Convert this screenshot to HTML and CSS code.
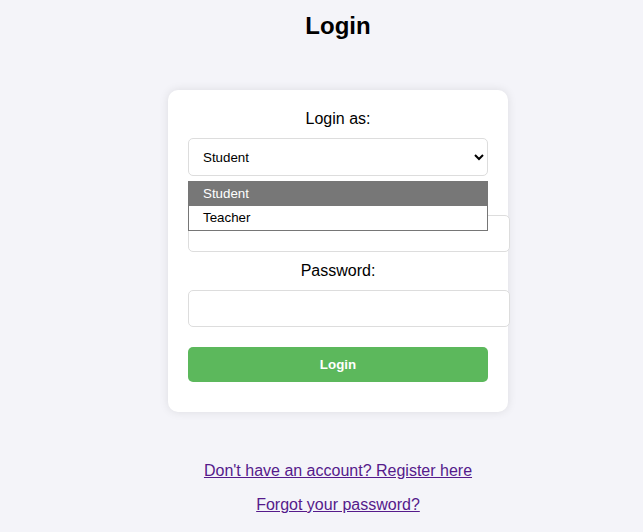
FILE: index.html
```html
<!DOCTYPE html>
<html>
<head>
<meta charset="utf-8">
<title>Login</title>
<link rel="stylesheet" href="styles.css">
</head>
<body>
<main class="page">
  <h2 class="title">Login</h2>
  <form class="card">
    <label class="label">Login as:</label>
    <div class="select-wrap">
      <select class="select">
        <option>Student</option>
        <option>Teacher</option>
      </select>
      <ul class="menu">
        <li class="menu-item active">Student</li>
        <li class="menu-item">Teacher</li>
      </ul>
    </div>
    <label class="label">Username:</label>
    <input class="input" type="text">
    <label class="label">Password:</label>
    <input class="input" type="password">
    <button class="btn" type="button">Login</button>
  </form>
  <div class="links">
    <a class="link" href="#">Don't have an account? Register here</a>
    <a class="link" href="#">Forgot your password?</a>
  </div>
</main>
</body>
</html>
```
FILE: styles.css
```css
html, body {
  margin: 0;
  padding: 0;
  background: #f4f4f9;
  font-family: "Liberation Sans", Arial, sans-serif;
}
.page {
  padding-left: 33px;
  display: flex;
  flex-direction: column;
  align-items: center;
}
.title {
  font-size: 24px;
  font-weight: bold;
  margin: 12px 0 0;
  line-height: 28px;
  color: #000;
}
.card {
  margin-top: 50px;
  width: 300px;
  padding: 20px;
  background: #fff;
  border-radius: 10px;
  box-shadow: 0 0 10px rgba(0, 0, 0, 0.1);
  display: flex;
  flex-direction: column;
  align-items: stretch;
}
.label {
  display: block;
  text-align: center;
  font-size: 16px;
  line-height: 18px;
  color: #000;
  margin-bottom: 10px;
}
.select-wrap {
  position: relative;
  margin-bottom: 11px;
}
.select {
  display: block;
  width: 300px;
  height: 38px;
  box-sizing: border-box;
  padding: 0 10px;
  font-family: "Liberation Sans", Arial, sans-serif;
  font-size: 13.33px;
  border: 1px solid #ddd;
  border-radius: 5px;
  background: #fff;
  color: #000;
}
.menu {
  position: absolute;
  left: 0;
  top: 43px;
  width: 300px;
  box-sizing: border-box;
  margin: 0;
  padding: 0;
  list-style: none;
  background: #fff;
  border: 1px solid #767676;
  z-index: 5;
}
.menu-item {
  height: 24px;
  line-height: 24px;
  padding-left: 14px;
  font-size: 13.33px;
  color: #000;
}
.menu-item.active {
  background: #777;
  color: #fff;
}
.input {
  display: block;
  width: 300px;
  padding: 10px;
  border: 1px solid #ddd;
  border-radius: 5px;
  font-size: 13.33px;
  line-height: 15px;
  margin: 0 0 10px;
  background: #fff;
}
.btn {
  margin-top: 10px;
  height: 35px;
  width: 300px;
  border: none;
  border-radius: 5px;
  background: #5cb85c;
  color: #fff;
  font-family: "Liberation Sans", Arial, sans-serif;
  font-weight: bold;
  font-size: 13.33px;
  margin-bottom: 10px;
}
.links {
  margin-top: 50px;
  display: flex;
  flex-direction: column;
  align-items: center;
  gap: 16px;
}
.link {
  font-size: 16px;
  line-height: 18px;
  color: #551a8b;
  text-decoration: underline;
}
```
